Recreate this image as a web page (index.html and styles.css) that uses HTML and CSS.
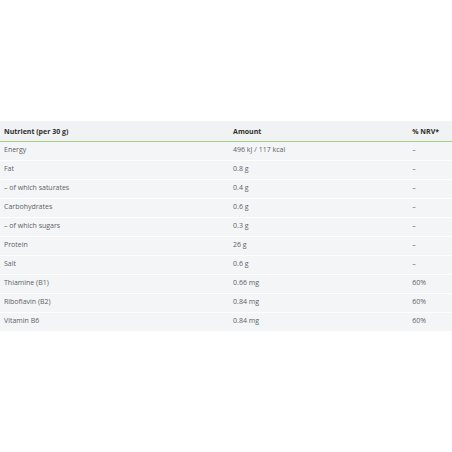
FILE: index.html
```html
<!DOCTYPE html>
<html>
<head>
<meta charset="utf-8">
<link rel="stylesheet" href="styles.css">
</head>
<body>
<div class="wrap">
<table class="nt">
  <thead>
    <tr><th class="c1">Nutrient (per 30 g)</th><th class="c2">Amount</th><th class="c3">% NRV*</th></tr>
  </thead>
  <tbody>
    <tr><td>Energy</td><td>496 kJ / 117 kcal</td><td>–</td></tr>
    <tr><td>Fat</td><td>0.8 g</td><td>–</td></tr>
    <tr><td>– of which saturates</td><td>0.4 g</td><td>–</td></tr>
    <tr><td>Carbohydrates</td><td>0.6 g</td><td>–</td></tr>
    <tr><td>– of which sugars</td><td>0.3 g</td><td>–</td></tr>
    <tr><td>Protein</td><td>26 g</td><td>–</td></tr>
    <tr><td>Salt</td><td>0.6 g</td><td>–</td></tr>
    <tr><td>Thiamine (B1)</td><td>0.66 mg</td><td>60%</td></tr>
    <tr><td>Riboflavin (B2)</td><td>0.84 mg</td><td>60%</td></tr>
    <tr><td>Vitamin B6</td><td>0.84 mg</td><td>60%</td></tr>
  </tbody>
</table>
</div>
</body>
</html>
```
FILE: styles.css
```css
html, body { margin: 0; padding: 0; background: #fff; }
body { font-family: "Open Sans", "Noto Sans", sans-serif; }
.wrap { padding-top: 121px; }
.nt { width: 452px; border-collapse: collapse; table-layout: fixed; }
.nt th, .nt td { text-align: left; font-size: 7px; white-space: nowrap; box-sizing: border-box; }
.nt th { background: #f1f2f4; color: #2e2e2e; font-weight: 700; height: 20px; padding: 2px 0 0 4px; border-bottom: 1px solid #a5cf86; }
.nt td { background: #f4f5f7; color: #606266; height: 19px; padding: 0 0 2px 4px; border-bottom: 1px solid #fff; }
.nt tbody tr:last-child td { border-bottom: none; }
.c1 { width: 225px; }
.c2 { width: 176px; }
.c3 { width: 43px; }
```
